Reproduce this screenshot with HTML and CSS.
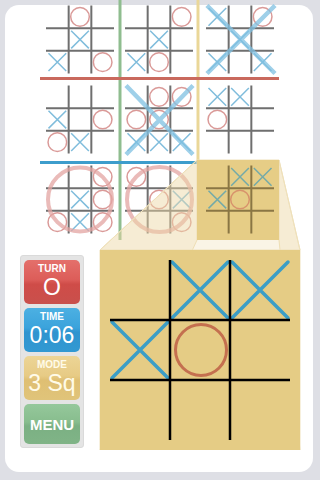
FILE: index.html
```html
<!DOCTYPE html>
<html>
<head>
<meta charset="utf-8">
<link rel="stylesheet" href="styles.css">
</head>
<body>
<div class="card">
  <svg class="board" viewBox="5 5 308 467" width="308" height="467" overflow="visible" xmlns="http://www.w3.org/2000/svg">
    <defs>
      <g id="grid" stroke="#6f6f6f" stroke-width="2" fill="none">
        <path d="M22.67 0V68M45.33 0V68M0 22.67H68M0 45.33H68"/>
      </g>
      <path id="sx" d="M2.5 2.5L20.2 20.2M20.2 2.5L2.5 20.2" stroke="#80bddc" stroke-width="1.5" fill="none"/>
      <circle id="so" cx="11.33" cy="11.33" r="9.3" stroke="#da9a98" stroke-width="1.5" fill="none"/>
      <g id="gridy" stroke="#8a7644" stroke-width="2" fill="none">
        <path d="M22.67 0V68M45.33 0V68M0 22.67H68M0 45.33H68"/>
      </g>
      <path id="sxy" d="M2.5 2.5L20.2 20.2M20.2 2.5L2.5 20.2" stroke="#74aaa8" stroke-width="1.5" fill="none"/>
      <circle id="soy" cx="11.33" cy="11.33" r="9.3" stroke="#d8936c" stroke-width="1.5" fill="none"/>
    </defs>

    <!-- meta separators (vertical) -->
    <line x1="120" y1="0" x2="120" y2="240" stroke="#8fbd8f" stroke-width="3"/>
    <line x1="198" y1="0" x2="198" y2="161" stroke="#ead798" stroke-width="3"/>

    <!-- board 0,0 -->
    <g transform="translate(46 5.5)">
      <use href="#grid"/>
      <use href="#so" x="22.67" y="0"/>
      <use href="#sx" x="22.67" y="22.67"/>
      <use href="#sx" x="0" y="45.33"/>
      <use href="#so" x="45.33" y="45.33"/>
    </g>
    <!-- board 0,1 -->
    <g transform="translate(125 5.5)">
      <use href="#grid"/>
      <use href="#so" x="45.33" y="0"/>
      <use href="#sx" x="22.67" y="22.67"/>
      <use href="#sx" x="0" y="45.33"/>
      <use href="#so" x="22.67" y="45.33"/>
    </g>
    <!-- board 0,2 -->
    <g transform="translate(206 5.5)">
      <use href="#grid"/>
      <use href="#sx" x="0" y="0"/>
      <use href="#so" x="45.33" y="0"/>
      <use href="#sx" x="22.67" y="22.67"/>
      <use href="#sx" x="0" y="45.33"/>
      <use href="#sx" x="45.33" y="45.33"/>
      <path d="M1 0L69 68M69 0L1 68" stroke="#7fc0e2" stroke-width="4.5" stroke-opacity="0.75" fill="none"/>
    </g>
    <!-- board 1,0 -->
    <g transform="translate(46 85.5)">
      <use href="#grid"/>
      <use href="#sx" x="0" y="22.67"/>
      <use href="#so" x="45.33" y="22.67"/>
      <use href="#so" x="0" y="45.33"/>
      <use href="#sx" x="22.67" y="45.33"/>
    </g>
    <!-- board 1,1 -->
    <g transform="translate(125 85.5)">
      <use href="#grid"/>
      <use href="#so" x="22.67" y="0"/>
      <use href="#so" x="45.33" y="0"/>
      <use href="#so" x="0" y="22.67"/>
      <use href="#so" x="22.67" y="22.67"/>
      <use href="#sx" x="0" y="45.33"/>
      <use href="#sx" x="22.67" y="45.33"/>
      <use href="#sx" x="45.33" y="45.33"/>
      <path d="M1 0L68 69M68 0L1 69" stroke="#7fc0e2" stroke-width="4.5" stroke-opacity="0.75" fill="none"/>
    </g>
    <!-- board 1,2 -->
    <g transform="translate(206 85.5)">
      <use href="#grid"/>
      <use href="#sx" x="0" y="0"/>
      <use href="#sx" x="22.67" y="0"/>
      <use href="#so" x="0" y="22.67"/>
    </g>
    <!-- board 2,0 -->
    <g transform="translate(46 165.5)">
      <use href="#grid"/>
      <use href="#so" x="45.33" y="0"/>
      <use href="#sx" x="22.67" y="22.67"/>
      <use href="#so" x="45.33" y="22.67"/>
      <use href="#so" x="0" y="45.33"/>
      <use href="#sx" x="22.67" y="45.33"/>
      <use href="#so" x="45.33" y="45.33"/>
      <circle cx="34" cy="34" r="32" stroke="#e3a4a2" stroke-width="4" stroke-opacity="0.75" fill="none"/>
    </g>
    <!-- board 2,1 -->
    <g transform="translate(125 165.5)">
      <use href="#grid"/>
      <use href="#so" x="0" y="0"/>
      <use href="#so" x="22.67" y="22.67"/>
      <use href="#sx" x="45.33" y="22.67"/>
      <use href="#so" x="45.33" y="45.33"/>
      <circle cx="34.5" cy="34" r="32.5" stroke="#e3a4a2" stroke-width="4" stroke-opacity="0.75" fill="none"/>
    </g>

    <!-- horizontal separators on top -->
    <line x1="40" y1="78.5" x2="279" y2="78.5" stroke="#c9695d" stroke-width="3"/>
    <line x1="40" y1="162.5" x2="198" y2="162.5" stroke="#3d9dcc" stroke-width="3"/>

    <!-- projection faces -->
    <polygon points="197,160 197,240 100,450 100,250" fill="#ecd9a6" fill-opacity="0.28" stroke="#efe1bb" stroke-width="1"/>
    <polygon points="279,160 279,240 300,450 300,250" fill="#ecd9a6" fill-opacity="0.28" stroke="#efe1bb" stroke-width="1"/>
    <polygon points="197,160 279,160 300,250 100,250" fill="#ecd9a6" fill-opacity="0.28" stroke="#efe1bb" stroke-width="1"/>

    <!-- highlighted small board 2,2 -->
    <rect x="197" y="160" width="82" height="80" fill="#e6cd86"/>
    <g transform="translate(206 165.5)">
      <use href="#gridy"/>
      <use href="#sxy" x="22.67" y="0"/>
      <use href="#sxy" x="45.33" y="0"/>
      <use href="#sxy" x="0" y="22.67"/>
      <use href="#soy" x="22.67" y="22.67"/>
    </g>

    <!-- big board -->
    <rect x="100" y="250" width="200" height="200" fill="#e5cc85"/>
    <g stroke="#3b9ec6" stroke-width="3.5" stroke-linecap="round" fill="none">
      <path d="M172 262L228 318M228 262L172 318"/>
      <path d="M232 262L288 318M288 262L232 318"/>
      <path d="M112 322L168 378M168 322L112 378"/>
    </g>
    <circle cx="201" cy="350" r="25.5" stroke="#c4704f" stroke-width="3" fill="none"/>
    <g stroke="#000" stroke-width="2.5" fill="none">
      <path d="M170 260V440M230 260V440M110 320H290M110 380H290"/>
    </g>
  </svg>

  <div class="sidebar">
    <div class="btn turn"><span class="lbl">TURN</span><span class="val">O</span></div>
    <div class="btn time"><span class="lbl">TIME</span><span class="val">0:06</span></div>
    <div class="btn mode"><span class="lbl">MODE</span><span class="val">3 Sq</span></div>
    <div class="btn menu"><span class="big">MENU</span></div>
  </div>
</div>
</body>
</html>
```
FILE: styles.css
```css
html, body {
  margin: 0;
  padding: 0;
}
body {
  width: 320px;
  height: 480px;
  overflow: hidden;
  background: #dedfe5;
  font-family: "Liberation Sans", Arial, sans-serif;
}
.card {
  margin: 5px 0 0 5px;
  width: 308px;
  height: 467px;
  background: #ffffff;
  border-radius: 14px;
  display: grid;
}
.board,
.sidebar {
  grid-area: 1 / 1;
}
.board {
  display: block;
}
.sidebar {
  align-self: start;
  justify-self: start;
  margin: 250px 0 0 15px;
  width: 56px;
  padding: 4px 3px 3px;
  background: #e4e4e4;
  border: 1px solid #dadada;
  border-radius: 3px;
  display: flex;
  flex-direction: column;
  gap: 4px;
}
.btn {
  height: 44px;
  border-radius: 5px;
  display: flex;
  flex-direction: column;
  align-items: center;
  color: #ffffff;
  box-sizing: border-box;
  padding-top: 3px;
}
.lbl {
  font-size: 10px;
  font-weight: bold;
  line-height: 12px;
}
.val {
  font-size: 23px;
  line-height: 25px;
}
.turn {
  background: linear-gradient(#e4706b 0%, #dc5d59 45%, #cf4c48 55%, #c9504c 100%);
}
.time {
  background: linear-gradient(#4cb0e2 0%, #3ba3dc 45%, #2f94cf 55%, #3299d2 100%);
}
.mode {
  background: linear-gradient(#ecd596 0%, #e7cb85 45%, #dfbf73 55%, #e0c47a 100%);
  color: #fffbe8;
}
.menu {
  height: 40px;
  justify-content: center;
  padding-top: 0;
  background: linear-gradient(#95c89b 0%, #88bd8e 45%, #7bb083 55%, #80b487 100%);
}
.big {
  font-size: 15px;
  font-weight: bold;
}
```
